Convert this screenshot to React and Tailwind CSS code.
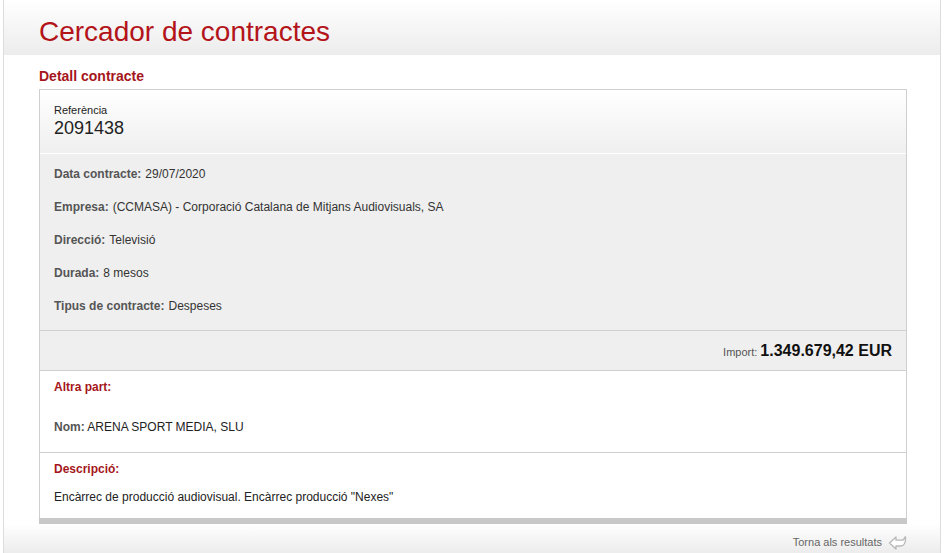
const rows = [
  { label: "Data contracte:", value: "29/07/2020" },
  { label: "Empresa:", value: "(CCMASA) - Corporació Catalana de Mitjans Audiovisuals, SA" },
  { label: "Direcció:", value: "Televisió" },
  { label: "Durada:", value: "8 mesos" },
  { label: "Tipus de contracte:", value: "Despeses" },
];

const BackArrow = () => (
  <svg width="19" height="17" viewBox="0 0 19 17" fill="none">
    <path
      d="M1.5 9 L8 3 L8 6.2 L13.5 6.2 Q16 6.2 17 3 L17.6 3 Q17.8 12 12.5 12 L8 12 L8 15 Z"
      stroke="#b8b8b8"
      strokeWidth="1.3"
      strokeLinejoin="round"
      fill="white"
    />
  </svg>
);

export default function App() {
  return (
    <div className="min-h-screen bg-white px-[3px] font-['Liberation_Sans',Arial,sans-serif]">
      <div className="flex h-[553px] flex-col border-x border-[#dcdcdc]">
        <header className="h-[55px] bg-gradient-to-b from-white to-[#ececec] pl-[35px] pt-[15px]">
          <h1 className="text-[28px] leading-[34px] text-[#b3141a]">Cercador de contractes</h1>
        </header>

        <div className="px-[35px] pr-[33px]">
          <h2 className="pt-[13px] pb-[4px] text-[14px] font-bold leading-[17px] text-[#a5161b]">
            Detall contracte
          </h2>

          <div className="border-x border-t border-[#cfcfcf]">
            <div className="h-[64px] border-b border-white bg-gradient-to-b from-white to-[#efefef] px-[14px] pt-[13px]">
              <div className="text-[11px] leading-[14px] text-[#222]">Referència</div>
              <div className="text-[18px] leading-[22px] text-[#222]">2091438</div>
            </div>

            <div className="bg-[#efefef] px-[14px] pt-[3px] pb-[8px]">
              {rows.map((r) => (
                <div key={r.label} className="flex h-[33px] items-center text-[12px] text-[#333]">
                  <span className="font-bold text-[#555]">{r.label}</span>
                  <span className="ml-[4px]">{r.value}</span>
                </div>
              ))}
            </div>

            <div className="flex h-[41px] items-center justify-end border-y border-[#cfcfcf] bg-[#efefef] px-[14px]">
              <span className="mr-[3px] mt-[4px] text-[11px] text-[#555]">Import:</span>
              <span className="text-[16px] font-bold text-[#111]">1.349.679,42 EUR</span>
            </div>

            <div className="border-b border-[#cfcfcf] bg-white px-[14px] pt-[8px] pb-[17px]">
              <div className="text-[12px] font-bold leading-[16px] text-[#a5161b]">Altra part:</div>
              <div className="mt-[24px] text-[12px] leading-[16px] text-[#222]">
                <span className="font-bold text-[#555]">Nom:</span> ARENA SPORT MEDIA, SLU
              </div>
            </div>

            <div className="h-[65px] bg-white px-[14px] pt-[8px]">
              <div className="text-[12px] font-bold leading-[16px] text-[#a5161b]">Descripció:</div>
              <div className="mt-[12px] text-[12px] leading-[16px] text-[#222]">
                Encàrrec de producció audiovisual. Encàrrec producció "Nexes"
              </div>
            </div>
          </div>
          <div className="h-[6px] bg-[#c8c8c8]" />
        </div>

        <footer className="flex flex-1 items-start justify-end gap-[6px] bg-gradient-to-b from-white to-[#ececec] pr-[33px] pt-[10px]">
          <span className="mt-[1px] text-[11px] leading-[14px] text-[#666]">Torna als resultats</span>
          <BackArrow />
        </footer>
      </div>
    </div>
  );
}
